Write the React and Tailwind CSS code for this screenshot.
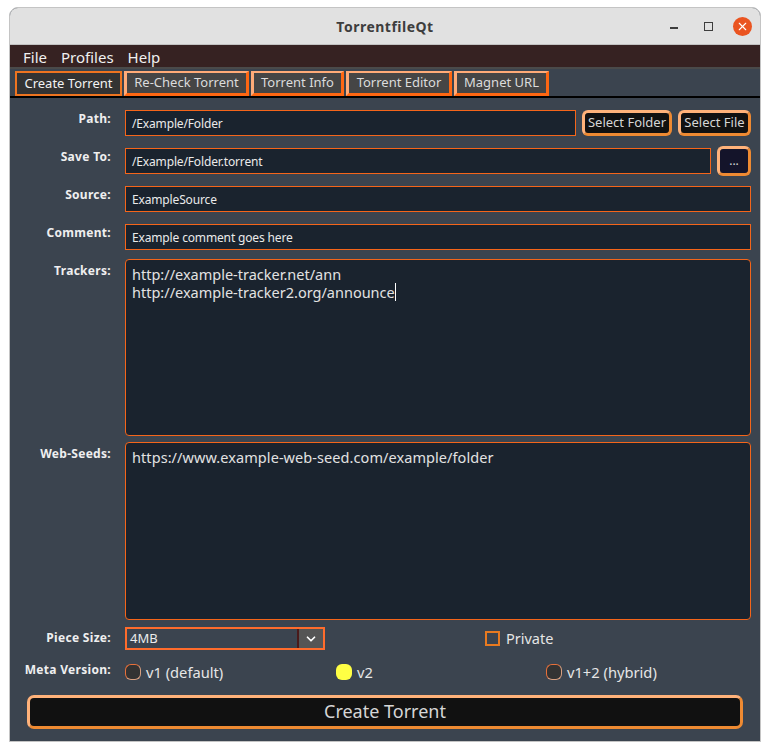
import React from 'react';
import { ChevronDown, X } from 'lucide-react';

const font = { fontFamily: '"Noto Sans", sans-serif' };

const tabs = [
  { label: 'Create Torrent', width: 'w-[107px]', active: true },
  { label: 'Re-Check Torrent', width: 'w-[125px]' },
  { label: 'Torrent Info', width: 'w-[93px]' },
  { label: 'Torrent Editor', width: 'w-[106px]' },
  { label: 'Magnet URL', width: 'w-[95px]' },
];

function Tab({ label, width, active }) {
  if (active) {
    return (
      <div className={`${width} h-[25px] flex items-center justify-center bg-[#333333] border-2 border-[#ee7420] text-[13px] text-[#f2f2f2]`}>
        {label}
      </div>
    );
  }
  return (
    <div className={`${width} h-[25px] pb-[1px] flex items-center justify-center bg-[#454545] border-[3px] border-t-2 border-t-[#ffab78] border-l-[#ffab78] border-r-[#ff6712] border-b-[#ff6712] text-[13px] text-[#dcdcdc]`}>
      {label}
    </div>
  );
}

function Label({ children, className = 'pt-[1px]' }) {
  return <div className={`w-[101px] shrink-0 text-right text-[12px] font-bold leading-[16px] tracking-[0.3px] text-[#efefef] ${className}`}>{children}</div>;
}

function Field({ children }) {
  return (
    <div className="flex-1 h-[26px] flex items-center px-[6px] pt-[2px] bg-[#1a232e] border border-[#f5651a] text-[12px] tracking-[-0.15px] text-[#eaeaea]">
      {children}
    </div>
  );
}

function Button({ children, className = '' }) {
  return (
    <div className={`flex items-center justify-center rounded-[6px] border-[3px] border-t-[#ffb27a] border-l-[#ffb27a] border-r-[#ee8a32] border-b-[#ee8a32] text-[#d6d6d6] ${className}`}>
      {children}
    </div>
  );
}

function Radio({ label, checked }) {
  return (
    <div className="flex items-center gap-[5px] text-[14.7px] leading-[16px] text-[#e6e6e6]">
      {checked ? (
        <span className="w-[16px] h-[16px] rounded-[6px] bg-[#ffff44]" />
      ) : (
        <span className="w-[16px] h-[16px] rounded-[6px] bg-[#333333] border border-t-[#e8703a] border-l-[#e8703a] border-r-[#d8a080] border-b-[#d8a080]" />
      )}
      <span>{label}</span>
    </div>
  );
}

export default function App() {
  return (
    <div className="w-[770px] h-[751px] bg-white pt-[7px] pl-[9px]" style={font}>
      <div className="w-[752px] h-[735px] flex flex-col bg-[#3b444f] border border-[#c4c4c4] rounded-t-[9px] overflow-hidden">
        {/* Title bar */}
        <div className="h-[37px] shrink-0 flex items-center bg-[#e1e1e1] border-b border-[#c2c2c2] relative">
          <div className="flex-1 text-center text-[14px] font-bold tracking-[0.5px] text-[#3d3d3d]">TorrentfileQt</div>
          <div className="absolute top-[9px] left-[660px] h-[19px] flex items-center">
            <div className="w-[8px] h-[1.5px] mt-[3px] bg-[#3d3d3d]" />
            <div className="w-[9px] h-[9px] ml-[26px] border-[1.5px] border-[#3d3d3d]" />
            <div className="ml-[20px] w-[19px] h-[19px] rounded-full bg-[#ea5420] flex items-center justify-center">
              <X className="w-[13px] h-[13px] text-white" strokeWidth={2} />
            </div>
          </div>
        </div>

        {/* Menu */}
        <div className="h-[22px] shrink-0 flex items-center gap-[14px] pl-[13px] pt-[2px] bg-[#362222] text-[15px] text-[#f0f0f0]">
          <span>File</span>
          <span>Profiles</span>
          <span>Help</span>
        </div>

        {/* Tabs */}
        <div className="h-[31px] shrink-0 flex items-end gap-[2px] pl-[5px] border-t-2 border-[#4a4a4a] border-b-2 border-b-black">
          {tabs.map((tab) => (
            <Tab key={tab.label} {...tab} />
          ))}
        </div>

        {/* Form */}
        <div className="flex-1 flex flex-col pt-[12px] pr-[9px]">
          <div className="flex gap-[14px]">
            <Label>Path:</Label>
            <div className="flex-1 flex gap-[6px]">
              <Field>/Example/Folder</Field>
              <Button className="w-[90px] h-[26px] text-[13px] bg-[#111111]">Select Folder</Button>
              <Button className="w-[73px] h-[26px] text-[13px] bg-[#111111]">Select File</Button>
            </div>
          </div>

          <div className="flex gap-[14px] mt-[12px]">
            <Label>Save To:</Label>
            <div className="flex-1 flex gap-[6px] h-[26px] items-center">
              <Field>/Example/Folder.torrent</Field>
              <Button className="w-[34px] h-[30px] text-[12px] bg-[#14142a]">...</Button>
            </div>
          </div>

          <div className="flex gap-[14px] mt-[12px]">
            <Label>Source:</Label>
            <Field>ExampleSource</Field>
          </div>

          <div className="flex gap-[14px] mt-[12px]">
            <Label>Comment:</Label>
            <Field>Example comment goes here</Field>
          </div>

          <div className="flex gap-[14px] mt-[9px]">
            <div className="pt-[3px]"><Label>Trackers:</Label></div>
            <div className="flex-1 h-[177px] px-[6px] pt-[5px] rounded-[4px] bg-[#1a232e] border border-[#f5651a] text-[14.5px] leading-[18px] text-[#e2e2e2]">
              <div>http://example-tracker.net/ann</div>
              <div className="flex items-center">
                http://example-tracker2.org/announce
                <span className="w-px h-[18px] bg-white" />
              </div>
            </div>
          </div>

          <div className="flex gap-[14px] mt-[6px]">
            <div className="pt-[3px]"><Label>Web-Seeds:</Label></div>
            <div className="flex-1 h-[178px] px-[6px] pt-[5px] rounded-[4px] bg-[#1a232e] border border-[#f5651a] text-[14.5px] leading-[18px] tracking-[0.07px] text-[#e2e2e2]">
              https://www.example-web-seed.com/example/folder
            </div>
          </div>

          <div className="flex gap-[14px] mt-[7px] h-[23px]">
            <div className="pt-[3px]"><Label className="pt-0">Piece Size:</Label></div>
            <div className="w-[200px] h-[23px] flex bg-[#3b444f] border-2 border-[#ff6c2c] text-[13px] text-[#ececec]">
              <div className="flex-1 flex items-center pl-[3px]">4MB</div>
              <div className="w-[26px] flex items-center justify-center bg-[#555555] border-l-2 border-[#4a1a1a]">
                <ChevronDown className="w-[14px] h-[14px] text-white" strokeWidth={3} />
              </div>
            </div>
            <div className="ml-[146px] flex items-center gap-[6px] text-[14.5px] text-[#e6e6e6]">
              <span className="w-[15px] h-[15px] border-2 border-[#e87a20]" />
              Private
            </div>
          </div>

          <div className="flex gap-[14px] mt-[13px] h-[18px]">
            <Label className="-mt-[1px]">Meta Version:</Label>
            <div className="flex-1 grid grid-cols-[211px_210px_1fr]">
              <Radio label="v1 (default)" />
              <Radio label="v2" checked />
              <Radio label="v1+2 (hybrid)" />
            </div>
          </div>

          <div className="mt-[14px] ml-[17px] mr-[8px]">
            <Button className="w-full h-[34px] rounded-[7px] text-[18px] pb-[1px] bg-[#111111]">Create Torrent</Button>
          </div>
        </div>
      </div>
    </div>
  );
}
